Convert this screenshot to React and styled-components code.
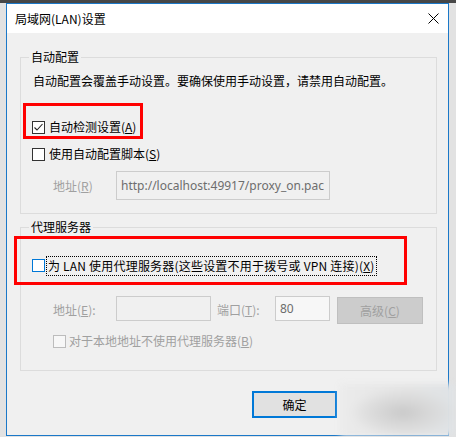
import React from 'react';
import styled, { createGlobalStyle } from 'styled-components';

const GlobalStyle = createGlobalStyle`
  html, body {
    margin: 0;
    padding: 0;
    background: #e4e4e4;
  }
  body {
    font-family: "Noto Sans CJK SC", "Noto Sans", sans-serif;
    font-size: 12px;
    color: #000;
  }
`;

const Screen = styled.div`
  width: 456px;
  height: 437px;
  overflow: hidden;
  background: linear-gradient(to bottom, #474747 0, #474747 3px, #e2e2e2 3px);
  display: flex;
  padding-top: 3px;
  box-sizing: border-box;
`;

const Dialog = styled.div`
  margin-left: 6px;
  width: 443px;
  height: 433px;
  box-sizing: border-box;
  border: 1px solid #1b78c8;
  background: #f0f0f0;
  display: flex;
  flex-direction: column;
  position: relative;
`;

const TitleBar = styled.div`
  height: 29px;
  background: #fff;
  display: flex;
  align-items: center;
  justify-content: space-between;
  padding: 0 9px 0 8px;
  flex-shrink: 0;
`;

const Title = styled.span`
  font-size: 12px;
  line-height: 16px;
`;

const Body = styled.div`
  padding: 16px 11px 0 13px;
  display: flex;
  flex-direction: column;
`;

const Group = styled.fieldset`
  margin: ${(p) => p.$top || 0}px 0 0 0;
  padding: 0 0 ${(p) => p.$bottom}px 11px;
  border: 1px solid #dcdcdc;
  min-width: 0;
`;

const Legend = styled.legend`
  margin-left: -3px;
  padding: 0 2px;
  line-height: 16px;
  font-size: 12px;
`;

const Desc = styled.div`
  margin-top: 8px;
  padding-left: 1px;
  line-height: 16px;
  white-space: nowrap;
`;

const Row = styled.div`
  position: relative;
  display: flex;
  align-items: center;
  margin-top: ${(p) => p.$top}px;
  margin-left: ${(p) => p.$indent || 0}px;
  height: ${(p) => p.$height || 16}px;
`;

const Box = styled.span`
  width: 13px;
  height: 13px;
  box-sizing: border-box;
  flex-shrink: 0;
  border: 1px solid ${(p) => (p.$disabled ? '#bcbcbc' : p.$focus ? '#0078d7' : '#333')};
  background: ${(p) => (p.$disabled ? '#f7f7f7' : '#fff')};
  display: flex;
  align-items: center;
  justify-content: center;
`;

const Label = styled.span`
  margin-left: ${(p) => p.$gap || 4}px;
  line-height: 16px;
  white-space: nowrap;
  color: ${(p) => (p.$disabled ? '#a0a0a0' : '#000')};
  ${(p) =>
    p.$focus &&
    `
    outline: 1px dotted #000;
    outline-offset: 0;
    padding: 1px 1px;
    margin-left: 2px;
    letter-spacing: 0.2px;
  `}
`;

const Key = styled.u`
  text-decoration: underline;
  text-underline-offset: 1px;
`;

const FieldLabel = styled.span`
  width: ${(p) => p.$width}px;
  flex-shrink: 0;
  color: #a0a0a0;
  line-height: 16px;
  white-space: nowrap;
`;

const Input = styled.div`
  width: ${(p) => p.$width}px;
  height: ${(p) => p.$height}px;
  box-sizing: border-box;
  border: 1px solid #cccccc;
  background: ${(p) => p.$bg || '#f0f0f0'};
  color: #6d6d6d;
  display: flex;
  align-items: ${(p) => (p.$top ? 'flex-start' : 'center')};
  align-self: ${(p) => (p.$top ? 'flex-start' : 'center')};
  padding: ${(p) => (p.$top ? '3px 0 0 4px' : '0 0 0 4px')};
  overflow: hidden;
  white-space: nowrap;
  flex-shrink: 0;
  font-family: "Noto Sans", "Noto Sans CJK SC", sans-serif;
  font-size: 12px;
`;

const Spacer = styled.span`
  width: ${(p) => p.$w}px;
  flex-shrink: 0;
`;

const DisabledButton = styled.div`
  width: 86px;
  height: 27px;
  box-sizing: border-box;
  margin-left: 7px;
  align-self: flex-start;
  margin-top: 1px;
  border: 1px solid #bfbfbf;
  background: #cccccc;
  color: #a0a0a0;
  display: flex;
  align-items: center;
  justify-content: center;
`;

const Highlight = styled.div`
  position: absolute;
  left: ${(p) => p.$l}px;
  top: ${(p) => p.$t}px;
  width: ${(p) => p.$w}px;
  height: ${(p) => p.$h}px;
  border: 3px solid #ff0000;
  box-sizing: border-box;
  pointer-events: none;
`;

const Footer = styled.div`
  display: flex;
  justify-content: flex-end;
  gap: 10px;
  margin-top: 20px;
  padding-right: 5px;
`;

const Button = styled.div`
  width: 85px;
  height: 27px;
  box-sizing: border-box;
  border: ${(p) => (p.$default ? '2px solid #0078d7' : '1px solid #adadad')};
  background: #e1e1e1;
  display: flex;
  align-items: center;
  justify-content: center;
`;

const Watermark = styled.div`
  position: absolute;
  left: 333px;
  top: 380px;
  width: 115px;
  height: 52px;
  background:
    radial-gradient(ellipse at 55% 55%, #c9c9c9 0, #d6d6d6 25%, rgba(230,230,230,0) 60%),
    linear-gradient(to right, #ebebeb, #e4e4e4 60%, #dfe3e6);
  filter: blur(3px);
  pointer-events: none;
`;

function Check({ checked }) {
  return (
    <svg width="11" height="11" viewBox="0 0 11 11">
      {checked && <path d="M1.5 5.5 L4 8 L9.5 2" fill="none" stroke="#222" strokeWidth="1.1" />}
    </svg>
  );
}

function CloseIcon() {
  return (
    <svg width="11" height="11" viewBox="0 0 11 11">
      <path d="M0.5 0.5 L10.5 10.5 M10.5 0.5 L0.5 10.5" stroke="#000" strokeWidth="1" />
    </svg>
  );
}

export default function App() {
  return (
    <>
      <GlobalStyle />
      <Screen>
        <Dialog>
          <TitleBar>
            <Title>局域网(LAN)设置</Title>
            <CloseIcon />
          </TitleBar>
          <Body>
            <Group $bottom={13}>
              <Legend>自动配置</Legend>
              <Desc>自动配置会覆盖手动设置。要确保使用手动设置，请禁用自动配置。</Desc>
              <Row $top={30}>
                <Box>
                  <Check checked />
                </Box>
                <Label>
                  自动检测设置(<Key>A</Key>)
                </Label>
                <Highlight $l={-9} $t={-16} $w={120} $h={36} />
              </Row>
              <Row $top={11}>
                <Box />
                <Label>
                  使用自动配置脚本(<Key>S</Key>)
                </Label>
              </Row>
              <Row $top={9} $height={29} $indent={21}>
                <FieldLabel $width={63}>
                  地址(<Key>R</Key>)
                </FieldLabel>
                <Input $width={214} $height={29}>
                  http://localhost:49917/proxy_on.pac
                </Input>
              </Row>
            </Group>

            <Group $top={5} $bottom={21}>
              <Legend>代理服务器</Legend>
              <Row $top={21} $height={19}>
                <Box $focus />
                <Label $focus>
                  为 LAN 使用代理服务器(这些设置不用于拨号或 VPN 连接)(<Key>X</Key>)
                </Label>
                <Highlight $l={-18} $t={-20} $w={393} $h={49} />
              </Row>
              <Row $top={21} $height={28} $indent={21}>
                <FieldLabel $width={63}>
                  地址(<Key>E</Key>):
                </FieldLabel>
                <Input $width={95} $height={25} $top />
                <Spacer $w={6} />
                <FieldLabel $width={58}>
                  端口(<Key>T</Key>):
                </FieldLabel>
                <Input $width={55} $height={25} $bg="#f7f7f7" $top>
                  80
                </Input>
                <DisabledButton>
                  高级(<Key>C</Key>)
                </DisabledButton>
              </Row>
              <Row $top={9} $indent={21}>
                <Box $disabled />
                <Label $disabled $gap={3}>
                  对于本地地址不使用代理服务器(<Key>B</Key>)
                </Label>
              </Row>
            </Group>

            <Footer>
              <Button $default>确定</Button>
              <Button>取消</Button>
            </Footer>
          </Body>
          <Watermark />
        </Dialog>
      </Screen>
    </>
  );
}
